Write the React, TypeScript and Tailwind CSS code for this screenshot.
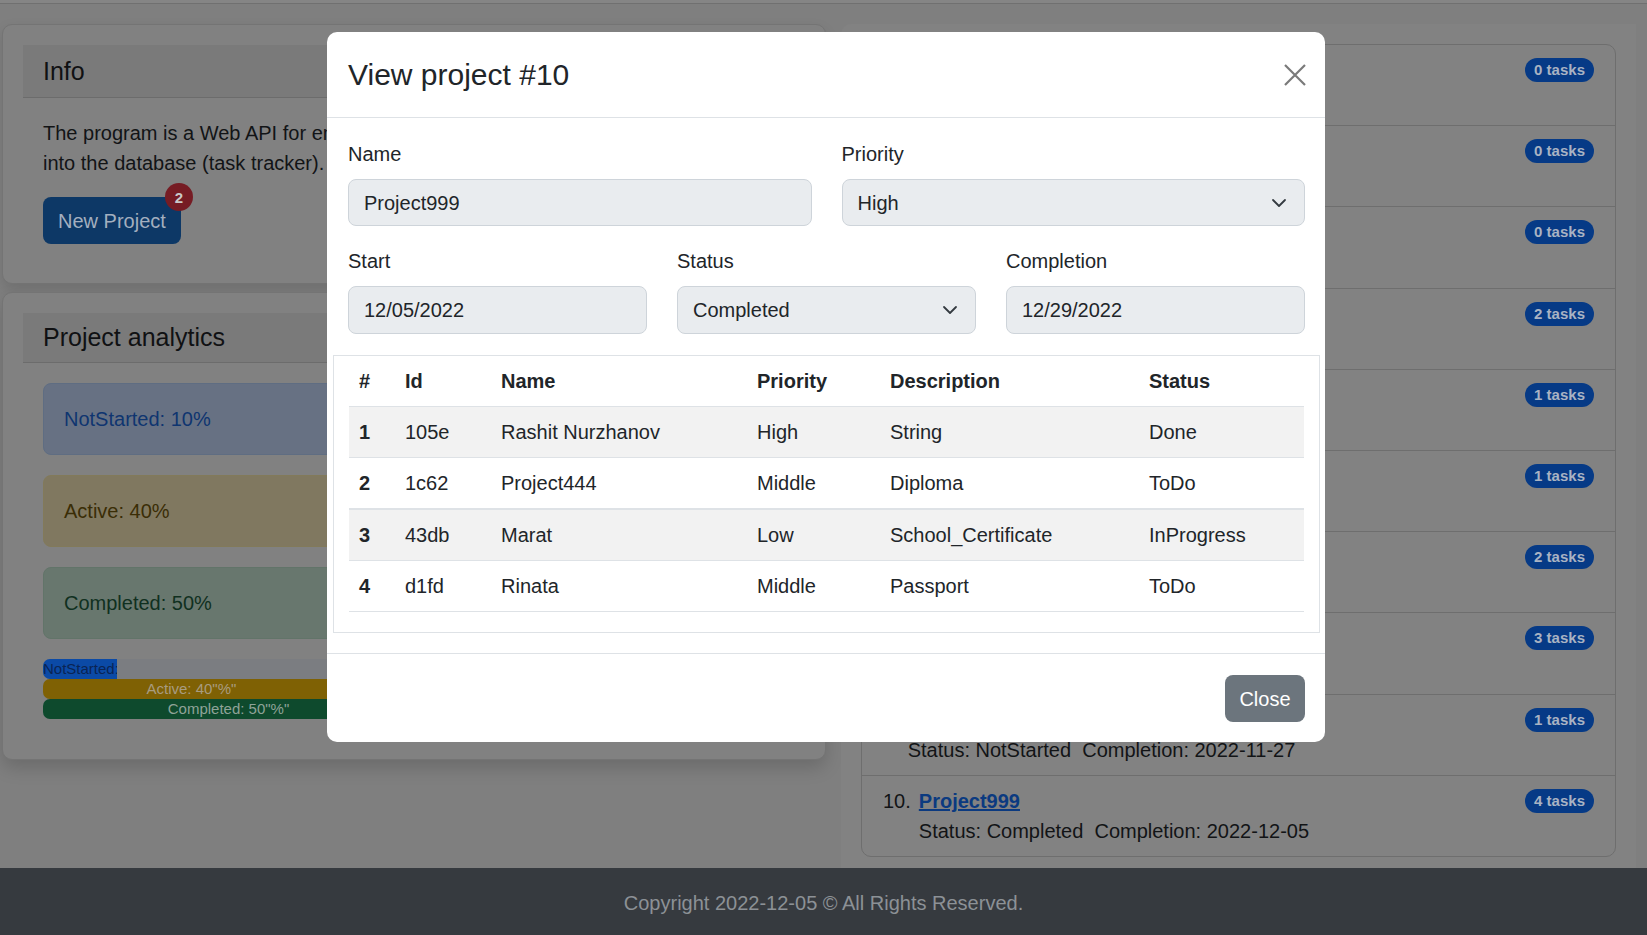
const projects = [
  { name: "Project1", status: "Active", completion: "2022-12-10", tasks: 0 },
  { name: "Project2", status: "NotStarted", completion: "2022-12-15", tasks: 0 },
  { name: "TestProject", status: "Active", completion: "2022-12-20", tasks: 0 },
  { name: "Diploma", status: "Completed", completion: "2022-11-30", tasks: 2 },
  { name: "Project123", status: "Active", completion: "2022-12-01", tasks: 1 },
  { name: "Project222", status: "Completed", completion: "2022-11-25", tasks: 1 },
  { name: "Project333", status: "Active", completion: "2022-12-12", tasks: 2 },
  { name: "Project444", status: "Completed", completion: "2022-12-03", tasks: 3 },
  { name: "Project777", status: "NotStarted", completion: "2022-11-27", tasks: 1 },
  { name: "Project999", status: "Completed", completion: "2022-12-05", tasks: 4 },
];

const tasks = [
  { n: 1, id: "105e", name: "Rashit Nurzhanov", priority: "High", desc: "String", status: "Done" },
  { n: 2, id: "1c62", name: "Project444", priority: "Middle", desc: "Diploma", status: "ToDo" },
  { n: 3, id: "43db", name: "Marat", priority: "Low", desc: "School_Certificate", status: "InProgress" },
  { n: 4, id: "d1fd", name: "Rinata", priority: "Middle", desc: "Passport", status: "ToDo" },
];

function Chevron() {
  return (
    <svg className="absolute right-[17px] top-1/2 -translate-y-1/2" width="16" height="16" viewBox="0 0 16 16" fill="none">
      <path d="M2 5l6 6 6-6" stroke="#343a40" strokeWidth="1.8" strokeLinecap="round" strokeLinejoin="round" />
    </svg>
  );
}

function Field({ label, value, select, h = "h-[47px]" }: { label: string; value: string; select?: boolean; h?: string }) {
  return (
    <div>
      <div className="mb-[10px] leading-[30px]">{label}</div>
      <div className={`relative flex items-center rounded-[8px] border border-[#ced4da] bg-[#e9ecef] px-[15px] ${h}`}>
        {value}
        {select && <Chevron />}
      </div>
    </div>
  );
}

function ProjectModal() {
  return (
    <div className="absolute left-[327px] top-[32px] w-[998px] rounded-[10px] bg-white text-[#212529]">
      <div className="flex h-[86px] items-center justify-between border-b border-[#dee2e6] pl-[21px] pr-[19px]">
        <h4 className="text-[30px] font-medium leading-[36px]">View project #10</h4>
        <svg width="22" height="22" viewBox="0 0 22 22">
          <path d="M1 1L21 21M21 1L1 21" stroke="#7a7a7a" strokeWidth="2.2" />
        </svg>
      </div>

      <div className="p-[20px] pl-[21px] pt-[21px]">
        <div className="mb-[20px] grid grid-cols-2 gap-x-[30px]">
          <Field label="Name" value="Project999" />
          <Field label="Priority" value="High" select />
        </div>
        <div className="mb-[21px] grid grid-cols-3 gap-x-[30px]">
          <Field label="Start" value="12/05/2022" h="h-[48px]" />
          <Field label="Status" value="Completed" select h="h-[48px]" />
          <Field label="Completion" value="12/29/2022" h="h-[48px]" />
        </div>

        <div className="-mx-[15px] border border-[#dee2e6] px-[15px]">
          <table className="mb-[20px] w-full border-collapse text-left">
            <colgroup>
              <col className="w-[46px]" />
              <col className="w-[96px]" />
              <col className="w-[256px]" />
              <col className="w-[133px]" />
              <col className="w-[259px]" />
              <col />
            </colgroup>
            <thead>
              <tr className="border-b border-[#dee2e6]">
                <th className="px-[10px] py-[10px] font-bold leading-[30px]">#</th>
                <th className="px-[10px] py-[10px] font-bold leading-[30px]">Id</th>
                <th className="px-[10px] py-[10px] font-bold leading-[30px]">Name</th>
                <th className="px-[10px] py-[10px] font-bold leading-[30px]">Priority</th>
                <th className="px-[10px] py-[10px] font-bold leading-[30px]">Description</th>
                <th className="px-[10px] py-[10px] font-bold leading-[30px]">Status</th>
              </tr>
            </thead>
            <tbody>
              {tasks.map((t) => (
                <tr
                  key={t.n}
                  className={`border-[#dee2e6] ${t.n === 2 ? "border-b-2" : "border-b"} ${t.n % 2 === 1 ? "bg-[#f2f2f2]" : "bg-white"}`}
                >
                  <td className="px-[10px] py-[10px] font-bold leading-[30px]">{t.n}</td>
                  <td className="px-[10px] py-[10px] leading-[30px]">{t.id}</td>
                  <td className="px-[10px] py-[10px] leading-[30px]">{t.name}</td>
                  <td className="px-[10px] py-[10px] leading-[30px]">{t.priority}</td>
                  <td className="px-[10px] py-[10px] leading-[30px]">{t.desc}</td>
                  <td className="px-[10px] py-[10px] leading-[30px]">{t.status}</td>
                </tr>
              ))}
            </tbody>
          </table>
        </div>
      </div>

      <div className="flex justify-end border-t border-[#dee2e6] pb-[20px] pr-[20px] pt-[21px]">
        <button className="h-[47px] w-[80px] rounded-[8px] bg-[#6c757d] text-white">Close</button>
      </div>
    </div>
  );
}

export default function App() {
  return (
    <div className="relative h-[935px] w-[1647px] overflow-hidden bg-[#7f7f7f] font-['Liberation_Sans',Arial,sans-serif] text-[20px] leading-[30px] text-[#121416]">
      <div className="h-[4px] border-b border-[#707070] bg-[#858585]" />

      <div className="flex h-[864px]">
        {/* left column */}
        <div className="flex w-[841px] flex-col gap-[8px] pl-[2px] pr-[15px] pt-[20px]">
          <div className="rounded-[10px] border border-[#747474] bg-[#818181] p-[20px] pb-[19px] shadow-[0_6px_14px_rgba(0,0,0,0.12)]">
            <div className="border-b border-[#6c6c6c] bg-[#7a7a7a] px-[20px] py-[10px] pt-[11px]">
              <h5 className="text-[25px] font-medium leading-[31px] text-[#101113]">Info</h5>
            </div>
            <div className="p-[20px] pb-[20px] pt-[20px]">
              <p className="mb-[19px]">
                The program is a Web API for entering information about projects and tasks
                <br />
                into the database (task tracker).
              </p>
              <button className="relative h-[47px] rounded-[8px] bg-[#0d3866] px-[15px] text-[#a3afbf]">
                New Project
                <span className="absolute right-[-12px] top-[-14px] flex h-[28px] w-[28px] items-center justify-center rounded-full bg-[#761c24] text-[15px] font-bold leading-none text-[#c9c9c9]">
                  2
                </span>
              </button>
            </div>
          </div>

          <div className="rounded-[10px] border border-[#747474] bg-[#818181] p-[20px] shadow-[0_8px_18px_rgba(0,0,0,0.16)]">
            <div className="border-b border-[#6c6c6c] bg-[#7a7a7a] px-[20px] py-[10px]">
              <h5 className="text-[25px] font-medium leading-[29px] text-[#101113]">Project analytics</h5>
            </div>
            <div className="p-[20px]">
              <div className="mb-[20px] rounded-[8px] border border-[#5f6d82] bg-[#677183] px-[20px] py-[20px] text-[#0f3570]">
                NotStarted: 10%
              </div>
              <div className="mb-[20px] rounded-[8px] border border-[#827a5a] bg-[#807860] px-[20px] py-[20px] text-[#3a2d06]">
                Active: 40%
              </div>
              <div className="mb-[20px] rounded-[8px] border border-[#627469] bg-[#68776e] px-[20px] py-[20px] text-[#10301f]">
                Completed: 50%
              </div>
              <div className="flex h-[20px] overflow-hidden rounded-[7px] bg-[#7b7d81] text-[15px] leading-[20px]">
                <div className="flex w-[10%] flex-col justify-center overflow-hidden whitespace-nowrap bg-[#0b4aa6] text-center text-[#0a2454]">
                  NotStarted: 10"%"
                </div>
              </div>
              <div className="flex h-[20px] overflow-hidden rounded-[7px] bg-[#7b7d81] text-[15px] leading-[20px]">
                <div className="flex w-[40%] flex-col justify-center overflow-hidden whitespace-nowrap bg-[#7f6104] text-center text-[#a89c80]">
                  Active: 40"%"
                </div>
              </div>
              <div className="flex h-[20px] overflow-hidden rounded-[7px] bg-[#7b7d81] text-[15px] leading-[20px]">
                <div className="flex w-[50%] flex-col justify-center overflow-hidden whitespace-nowrap bg-[#0e4a2d] text-center text-[#8fa398]">
                  Completed: 50"%"
                </div>
              </div>
            </div>
          </div>
        </div>

        {/* right column */}
        <div className="mt-[20px] w-[795px] rounded-tl-[10px] bg-[#828282] px-[20px] pt-[20px]">
          <ol className="overflow-hidden rounded-[10px] border border-[#6e6e6e]">
            {projects.map((p, i) => (
              <li
                key={p.name}
                className={`flex items-start justify-between px-[21px] py-[10.1px] ${i < projects.length - 1 ? "border-b border-[#6e6e6e]" : ""}`}
              >
                <div className="flex">
                  <span>{i + 1}.</span>
                  <div className="ml-[8px]">
                    <a className="font-bold text-[#0b3a80] underline">{p.name}</a>
                    <div>
                      Status: {p.status}&nbsp; Completion: {p.completion}
                    </div>
                  </div>
                </div>
                <span className="mt-[3px] flex h-[24px] items-center rounded-full bg-[#063a86] px-[9px] text-[15px] font-bold text-[#a9b3c3]">
                  {p.tasks} tasks
                </span>
              </li>
            ))}
          </ol>
        </div>
      </div>

      <footer className="flex h-[67px] items-center justify-center bg-[#363a3f] pt-[3px] text-[#8c9196]">
        Copyright 2022-12-05 © All Rights Reserved.
      </footer>

      <ProjectModal />
    </div>
  );
}
